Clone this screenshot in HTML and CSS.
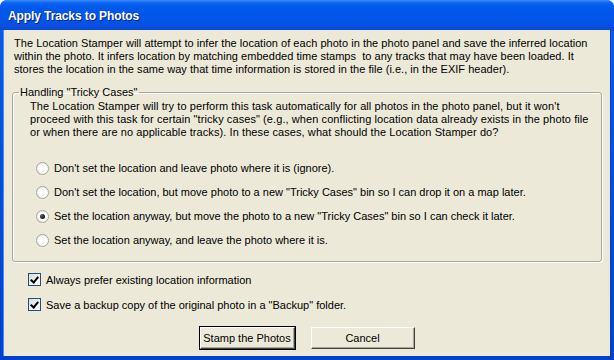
FILE: index.html
```html
<!DOCTYPE html>
<html lang="en">
<head>
  <meta charset="UTF-8">
  <title>Apply Tracks to Photos</title>
  <link rel="stylesheet" href="styles.css">
</head>
<body>

  <div class="window">
    <div class="titlebar">
      <span class="title">Apply Tracks to Photos</span>
    </div>

    <div class="client">
      <p class="intro">
        The Location Stamper will attempt to infer the location of each photo in the photo panel and save the inferred location
        within the photo. It infers location by matching embedded time stamps&nbsp; to any tracks that may have been loaded. It
        stores the location in the same way that time information is stored in the file (i.e., in the EXIF header).
      </p>

      <fieldset class="group">
        <legend>Handling "Tricky Cases"</legend>
        <p class="group-text">
          The Location Stamper will try to perform this task automatically for all photos in the photo panel, but it won't
          proceed with this task for certain "tricky cases" (e.g., when conflicting location data already exists in the photo file
          or when there are no applicable tracks). In these cases, what should the Location Stamper do?
        </p>

        <div class="options">
          <label class="option"><span class="radio"></span>Don't set the location and leave photo where it is (ignore).</label>
          <label class="option"><span class="radio"></span>Don't set the location, but move photo to a new "Tricky Cases" bin so I can drop it on a map later.</label>
          <label class="option"><span class="radio checked"></span>Set the location anyway, but move the photo to a new "Tricky Cases" bin so I can check it later.</label>
          <label class="option"><span class="radio"></span>Set the location anyway, and leave the photo where it is.</label>
        </div>
      </fieldset>

      <div class="checks">
        <label class="check"><span class="box"></span>Always prefer existing location information</label>
        <label class="check"><span class="box"></span>Save a backup copy of the original photo in a "Backup" folder.</label>
      </div>

      <div class="buttons">
        <button class="btn btn-stamp">Stamp the Photos</button>
        <button class="btn btn-cancel">Cancel</button>
      </div>
    </div>
  </div>

</body>
</html>
```

FILE: styles.css
```css
/* Janela estilo Windows XP */
body {
  margin: 0;
  padding: 0;
  background-color: #ffffff;
  font-family: "Liberation Sans", Arial, sans-serif;
  font-size: 11px;
  color: #000;
}

.window {
  width: 614px;
  height: 360px;
  display: flex;
  flex-direction: column;
  background: linear-gradient(to bottom, #0a5ee8, #0041cf);
  border-radius: 7px 7px 0 0;
  overflow: hidden;
}

.titlebar {
  height: 30px;
  flex-shrink: 0;
  display: flex;
  align-items: center;
  padding-left: 8px;
  background: linear-gradient(to bottom, #3c8dff 0px, #0b63f0 3px, #0058ee 8px, #0255e8 20px, #0a4fe0 27px, #0846d2 30px);
}

.title {
  color: #fff;
  font-family: "Liberation Sans", Arial, sans-serif;
  font-weight: bold;
  font-size: 12px;
  letter-spacing: -0.1px;
  text-shadow: 1px 1px 0 #0a1e8a;
  margin-top: 2px;
}

.client {
  flex: 1;
  margin: 0 4px 4px 4px;
  background-color: #ece9d8;
  display: flex;
  flex-direction: column;
  box-shadow: -1px 0 0 #4a8cf0, 1px 0 0 #0a3ec8;
}

.intro {
  margin: 0;
  padding: 7px 10px 0 10px;
  line-height: 13px;
  letter-spacing: 0.03px;
}

.group {
  margin: 10px 8px 0 8px;
  padding: 0 8px 9px 17px;
  border: 1px solid #aca899;
  border-radius: 3px;
  box-shadow: 1px 1px 0 #fff, inset 1px 1px 0 #fff;
}

.group legend {
  padding: 0 2px 0 1px;
  margin-left: -11px;
  line-height: 13px;
}

.group-text {
  margin: 1px 0 0 0;
  line-height: 13px;
  letter-spacing: 0.08px;
}

.options {
  display: flex;
  flex-direction: column;
  margin-top: 17px;
  padding-left: 6px;
}

.option {
  height: 24px;
  display: flex;
  align-items: center;
  gap: 5px;
}

.radio {
  width: 11px;
  height: 11px;
  border-radius: 50%;
  border: 1px solid #a5a59c;
  background: radial-gradient(circle at 60% 60%, #ffffff 40%, #e4e2da 100%);
  display: inline-flex;
  align-items: center;
  justify-content: center;
  flex-shrink: 0;
}

.radio.checked::after {
  content: "";
  width: 5px;
  height: 5px;
  border-radius: 50%;
  background: radial-gradient(circle at 35% 35%, #5a5a5a, #111 70%);
}

.checks {
  display: flex;
  flex-direction: column;
  margin-top: 5px;
  padding-left: 24px;
}

.check {
  height: 25px;
  display: flex;
  align-items: center;
  gap: 5px;
}

.box {
  width: 11px;
  height: 11px;
  border: 1px solid #1c5180;
  background: linear-gradient(135deg, #dcdcd6, #ffffff);
  position: relative;
  flex-shrink: 0;
}

.box::after {
  content: "";
  position: absolute;
  left: 3px;
  top: 1px;
  width: 3px;
  height: 6px;
  border: solid #000;
  border-width: 0 2px 2px 0;
  transform: rotate(40deg);
}

.buttons {
  display: flex;
  justify-content: center;
  gap: 16px;
  margin-top: 10px;
}

.btn {
  height: 22px;
  font-family: "Liberation Sans", Arial, sans-serif;
  font-size: 11px;
  color: #000;
  background-color: #ece9d8;
  border: 1px solid;
  border-color: #fff #404040 #404040 #fff;
  box-shadow: inset -1px -1px 0 #aca899;
  padding: 0;
}

.btn-stamp {
  width: 95px;
  outline: 1px solid #000;
  outline-offset: 0;
}

.btn-cancel {
  width: 104px;
}
```
